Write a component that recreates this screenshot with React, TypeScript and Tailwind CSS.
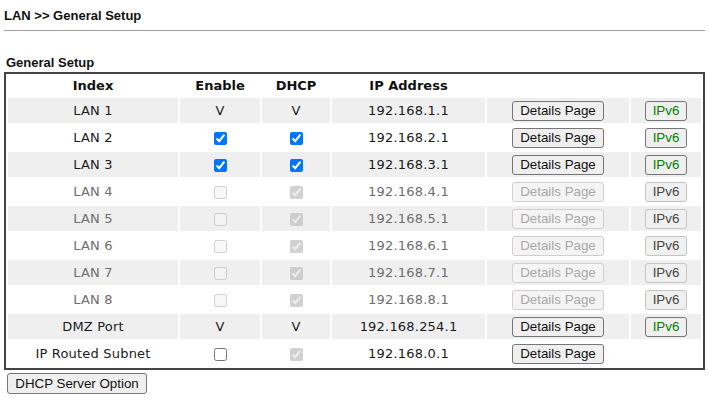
import React from "react";

type Row = {
  name: string;
  enable: "V" | "on" | "off" | "offDark";
  dhcp: "V" | "on" | "dis";
  ip: string;
  muted: boolean;
  ipv6: "green" | "gray" | "none";
};

const rows: Row[] = [
  { name: "LAN 1", enable: "V", dhcp: "V", ip: "192.168.1.1", muted: false, ipv6: "green" },
  { name: "LAN 2", enable: "on", dhcp: "on", ip: "192.168.2.1", muted: false, ipv6: "green" },
  { name: "LAN 3", enable: "on", dhcp: "on", ip: "192.168.3.1", muted: false, ipv6: "green" },
  { name: "LAN 4", enable: "off", dhcp: "dis", ip: "192.168.4.1", muted: true, ipv6: "gray" },
  { name: "LAN 5", enable: "off", dhcp: "dis", ip: "192.168.5.1", muted: true, ipv6: "gray" },
  { name: "LAN 6", enable: "off", dhcp: "dis", ip: "192.168.6.1", muted: true, ipv6: "gray" },
  { name: "LAN 7", enable: "off", dhcp: "dis", ip: "192.168.7.1", muted: true, ipv6: "gray" },
  { name: "LAN 8", enable: "off", dhcp: "dis", ip: "192.168.8.1", muted: true, ipv6: "gray" },
  { name: "DMZ Port", enable: "V", dhcp: "V", ip: "192.168.254.1", muted: false, ipv6: "green" },
  { name: "IP Routed Subnet", enable: "offDark", dhcp: "dis", ip: "192.168.0.1", muted: false, ipv6: "none" },
];

function Cell({ v }: { v: string }) {
  if (v === "V") return <span>V</span>;
  if (v === "on") return <input type="checkbox" defaultChecked className="align-middle m-0" />;
  if (v === "off") return <input type="checkbox" disabled className="align-middle m-0" />;
  if (v === "offDark") return <input type="checkbox" className="align-middle m-0" />;
  return <input type="checkbox" disabled defaultChecked className="align-middle m-0" />;
}

export default function App() {
  return (
    <div className="w-[709px] h-[398px] bg-white relative font-['DejaVu_Sans',Verdana,sans-serif] text-[13px] text-[#222]">
      <div className="px-[4px] pt-[8px]">
        <div className="font-['Liberation_Sans',Arial,sans-serif] font-bold text-[13px] leading-[16px] text-[#111]">
          LAN &gt;&gt; General Setup
        </div>
        <div className="mt-[6px] h-px bg-[#a0a0a0] w-[701px]" />
        <div className="mt-[24px] pl-[2px] font-['Liberation_Sans',Arial,sans-serif] font-bold text-[13px] leading-[15px] text-[#111]">
          General Setup
        </div>
        <table className="mt-[2px] border-separate border-spacing-[2px] border-2 border-[#444] w-[700px] table-fixed">
          <colgroup>
            <col className="w-[170px]" />
            <col className="w-[80px]" />
            <col className="w-[68px]" />
            <col className="w-[153px]" />
            <col className="w-[142px]" />
            <col className="w-[70px]" />
          </colgroup>
          <thead>
            <tr className="h-[20px] font-bold text-[#111]">
              <th className="p-0 text-center">Index</th>
              <th className="p-0 text-center">Enable</th>
              <th className="p-0 text-center">DHCP</th>
              <th className="p-0 text-center">IP Address</th>
              <th className="p-0" />
              <th className="p-0" />
            </tr>
          </thead>
          <tbody>
            {rows.map((r, i) => {
              const bg = i % 2 === 0 ? "bg-[#efefef]" : "bg-white";
              const txt = r.muted ? "text-[#6e6e6e]" : "text-[#1a1a1a]";
              return (
                <tr key={r.name} className="h-[25px]">
                  <td className={`p-0 text-center tracking-[0.2px] ${bg} ${txt}`}>{r.name}</td>
                  <td className={`p-0 text-center leading-none ${bg} ${txt}`}>
                    <Cell v={r.enable} />
                  </td>
                  <td className={`p-0 text-center leading-none ${bg} ${txt}`}>
                    <Cell v={r.dhcp} />
                  </td>
                  <td className={`p-0 text-center tracking-[0.2px] ${bg} ${txt}`}>{r.ip}</td>
                  <td className={`p-0 text-center ${bg}`}>
                    {r.muted ? (
                      <button
                        disabled
                        className="w-[92px] h-[20px] rounded-[3px] border border-[#cfcfcf] bg-[#f4f4f4] text-[#a8a8a8] font-['Liberation_Sans',Arial,sans-serif] text-[13.33px] leading-none align-middle"
                      >
                        Details Page
                      </button>
                    ) : (
                      <button className="w-[92px] h-[20px] rounded-[3px] border border-[#767676] bg-[#efefef] text-[#111] font-['Liberation_Sans',Arial,sans-serif] text-[13.33px] leading-none align-middle">
                        Details Page
                      </button>
                    )}
                  </td>
                  <td className={`p-0 text-center ${bg}`}>
                    {r.ipv6 === "green" && (
                      <button className="w-[42px] h-[20px] rounded-[3px] border border-[#767676] bg-[#efefef] text-[#008000] font-['Liberation_Sans',Arial,sans-serif] text-[13.33px] leading-none align-middle">
                        IPv6
                      </button>
                    )}
                    {r.ipv6 === "gray" && (
                      <button className="w-[42px] h-[20px] rounded-[3px] border border-[#c4c4c4] bg-[#f0f0f0] text-[#444] font-['Liberation_Sans',Arial,sans-serif] text-[13.33px] leading-none align-middle">
                        IPv6
                      </button>
                    )}
                  </td>
                </tr>
              );
            })}
          </tbody>
        </table>
        <button className="mt-[3px] ml-[3px] w-[140px] h-[21px] rounded-[3px] border border-[#767676] bg-[#efefef] text-[#111] font-['Liberation_Sans',Arial,sans-serif] text-[13.33px] leading-none">
          DHCP Server Option
        </button>
      </div>
    </div>
  );
}
